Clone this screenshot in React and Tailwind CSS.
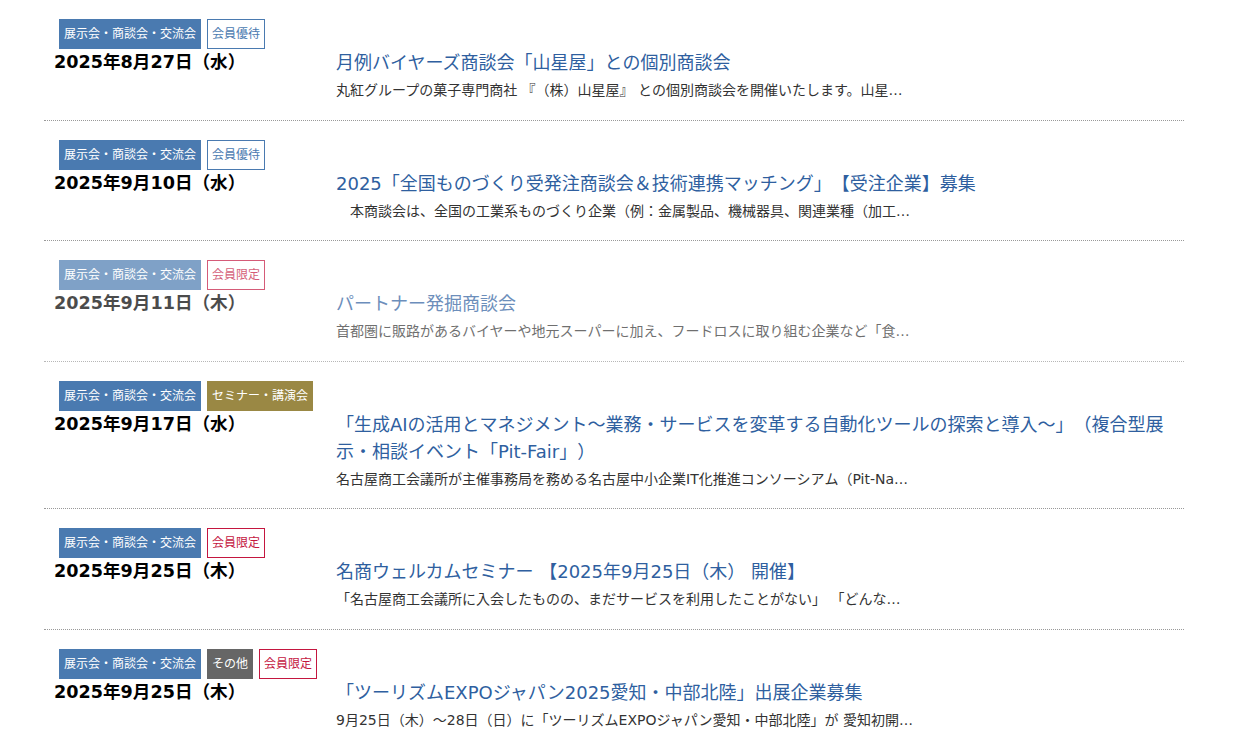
const events = [
  {
    tags: [{ label: "展示会・商談会・交流会", kind: "blue" }, { label: "会員優待", kind: "outlineBlue" }],
    date: "2025年8月27日（水）",
    title: "月例バイヤーズ商談会「山星屋」との個別商談会",
    desc: "丸紅グループの菓子専門商社 『（株）山星屋』 との個別商談会を開催いたします。山星…",
  },
  {
    tags: [{ label: "展示会・商談会・交流会", kind: "blue" }, { label: "会員優待", kind: "outlineBlue" }],
    date: "2025年9月10日（水）",
    title: "2025「全国ものづくり受発注商談会＆技術連携マッチング」【受注企業】募集",
    desc: "　本商談会は、全国の工業系ものづくり企業（例：金属製品、機械器具、関連業種（加工…",
  },
  {
    tags: [{ label: "展示会・商談会・交流会", kind: "blue" }, { label: "会員限定", kind: "outlineRed" }],
    date: "2025年9月11日（木）",
    title: "パートナー発掘商談会",
    desc: "首都圏に販路があるバイヤーや地元スーパーに加え、フードロスに取り組む企業など「食…",
    hover: true,
  },
  {
    tags: [{ label: "展示会・商談会・交流会", kind: "blue" }, { label: "セミナー・講演会", kind: "olive" }],
    date: "2025年9月17日（水）",
    title: "「生成AIの活用とマネジメント～業務・サービスを変革する自動化ツールの探索と導入～」（複合型展示・相談イベント「Pit-Fair」）",
    desc: "名古屋商工会議所が主催事務局を務める名古屋中小企業IT化推進コンソーシアム（Pit-Na…",
  },
  {
    tags: [{ label: "展示会・商談会・交流会", kind: "blue" }, { label: "会員限定", kind: "outlineRed" }],
    date: "2025年9月25日（木）",
    title: "名商ウェルカムセミナー 【2025年9月25日（木） 開催】",
    desc: "「名古屋商工会議所に入会したものの、まだサービスを利用したことがない」 「どんな…",
  },
  {
    tags: [
      { label: "展示会・商談会・交流会", kind: "blue" },
      { label: "その他", kind: "gray" },
      { label: "会員限定", kind: "outlineRed" },
    ],
    date: "2025年9月25日（木）",
    title: "「ツーリズムEXPOジャパン2025愛知・中部北陸」出展企業募集",
    desc: "9月25日（木）～28日（日）に「ツーリズムEXPOジャパン愛知・中部北陸」が 愛知初開…",
  },
];

const tagStyles = {
  blue: "bg-[#4a7ab0] border-[#4a7ab0] text-white",
  outlineBlue: "bg-white border-[#4a7ab0] text-[#4a7ab0]",
  outlineRed: "bg-white border-[#c4163f] text-[#c4163f]",
  olive: "bg-[#9a8844] border-[#9a8844] text-white",
  gray: "bg-[#666666] border-[#666666] text-white",
};

const Tag = ({ label, kind }) => (
  <span className={`inline-block border px-1 py-[6px] text-[12px] leading-4 whitespace-nowrap ${tagStyles[kind]}`}>
    {label}
  </span>
);

const EventRow = ({ e }) => (
  <li className={`border-b border-dotted border-[#999999] pt-[19px] pb-[17.5px] ${e.hover ? "opacity-70" : ""}`}>
    <a href="#" className="block">
      <div className="flex gap-[6px] pl-[15px]">
        {e.tags.map((t) => (
          <Tag key={t.label} {...t} />
        ))}
      </div>
      <div className="grid grid-cols-[282px_1fr] pl-[10px] pr-[10px]">
        <p className="text-[17.6px] leading-[27px] font-bold text-black whitespace-nowrap">{e.date}</p>
        <div>
          <h3 className="text-[18px] leading-[27px] text-[#2f5f9f]">{e.title}</h3>
          <p className="mt-[2px] text-[14px] leading-6 text-[#333333]">{e.desc}</p>
        </div>
      </div>
    </a>
  </li>
);

export default function App() {
  return (
    <div
      className="min-h-screen bg-white [text-spacing-trim:space-all]"
      style={{ fontFamily: '"DejaVu Sans", "Noto Sans CJK JP", sans-serif' }}
    >
      <ul className="ml-[44px] w-[1140px]">
        {events.map((e, i) => (
          <EventRow key={i} e={e} />
        ))}
      </ul>
    </div>
  );
}
